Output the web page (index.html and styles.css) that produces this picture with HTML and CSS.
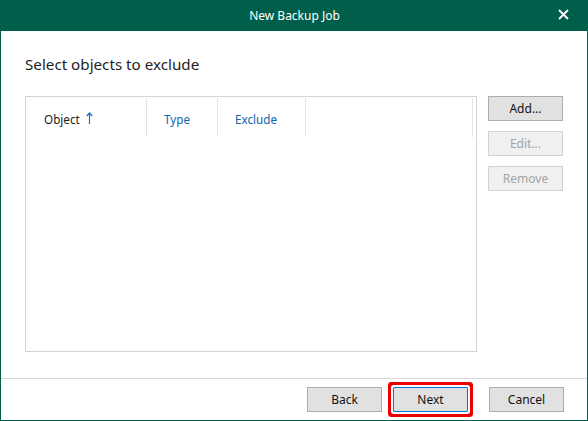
FILE: index.html
```html
<!DOCTYPE html>
<html>
<head>
<meta charset="utf-8">
<link rel="stylesheet" href="styles.css">
</head>
<body>
<div class="window">
  <div class="titlebar">
    <span class="title">New Backup Job</span>
    <svg class="close" width="11" height="11" viewBox="0 0 11 11"><path d="M1 1 L10 10 M10 1 L1 10" stroke="#fff" stroke-width="1.8" fill="none"/></svg>
  </div>
  <div class="body">
    <div class="content">
      <h1 class="heading">Select objects to exclude</h1>
      <div class="main">
        <div class="table">
          <div class="thead">
            <div class="th c1"><span class="dark">Object</span><svg class="arrow" width="7" height="12" viewBox="0 0 7 12"><path d="M3.5 1 L3.5 12 M0.8 4 L3.5 1 L6.2 4" stroke="#1a6fbf" stroke-width="1.2" fill="none"/></svg></div>
            <div class="th c2"><span class="link">Type</span></div>
            <div class="th c3"><span class="link">Exclude</span></div>
            <div class="th c4"></div>
          </div>
        </div>
        <div class="side">
          <button class="btn">Add...</button>
          <button class="btn" disabled>Edit...</button>
          <button class="btn" disabled>Remove</button>
        </div>
      </div>
    </div>
    <div class="footer">
      <button class="btn">Back</button>
      <button class="btn next">Next</button>
      <button class="btn cancel">Cancel</button>
    </div>
  </div>
</div>
</body>
</html>
```
FILE: styles.css
```css
html, body { margin: 0; padding: 0; }
body { font-family: "Noto Sans", "Open Sans", sans-serif; background: #fff; }
.window {
  width: 588px; height: 421px; box-sizing: border-box;
  background: #005f4b; padding: 0 1px 1px 1px;
  display: flex; flex-direction: column;
}
.titlebar {
  height: 31px; position: relative; flex: none;
  display: flex; align-items: center; justify-content: center;
}
.title { color: #fff; font-size: 12px; line-height: 16px; margin-left: 1px; }
.close { position: absolute; left: 557px; top: 9px; }
.body { flex: 1; background: #fff; display: flex; flex-direction: column; }
.content { flex: 1; padding: 0 23px 0 24px; }
.heading {
  margin: 23px 0 0 0; font-weight: normal; font-size: 15.2px; line-height: 20px; color: #1e1e1e;
}
.main { display: flex; gap: 11px; margin-top: 22px; }
.table {
  width: 452px; height: 256px; box-sizing: border-box;
  border: 1px solid #d3d3d3;
}
.thead { display: flex; height: 39px; margin-top: 1px; }
.th {
  border-right: 1px solid #e4e4e4; box-sizing: border-box;
  font-size: 11.7px; display: flex; align-items: center; padding-top: 3px;
}
.c1 { width: 121px; padding-left: 18px; }
.c2 { width: 71px; padding-left: 17px; }
.c3 { width: 88px; padding-left: 17px; }
.c4 { width: 167px; }
.dark { color: #222; }
.link { color: #0b64b0; }
.arrow { margin-left: 6px; margin-top: -2px; }
.side { display: flex; flex-direction: column; gap: 10px; }
.btn {
  width: 75px; height: 25px; box-sizing: border-box;
  background: #e1e1e1; border: 1px solid #adadad; border-radius: 0;
  font-family: "Noto Sans", "Open Sans", sans-serif; font-size: 12px; color: #111;
  padding: 0; margin: 0;
}
.btn:disabled { background: #f0f0f0; border-color: #d2d2d2; color: #a3a3a3; }
.footer {
  flex: none; border-top: 1px solid #d6d6d6;
  display: flex; justify-content: flex-end; align-items: flex-start;
  padding: 8px 23px 0 0; box-sizing: border-box; height: 42px;
}
.next {
  margin-left: 11px; border-color: #0078d7;
  box-shadow: 0 0 0 2px #fff, 0 0 0 5px #ee0000; border-radius: 1px;
}
.cancel { margin-left: 21px; }
```
